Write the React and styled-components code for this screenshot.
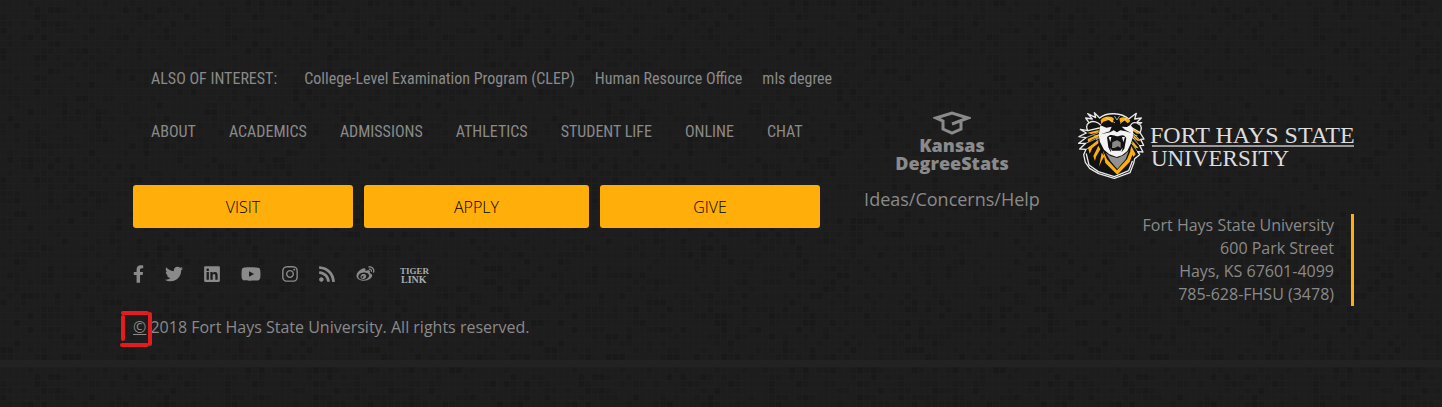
import React from 'react'
import styled, { createGlobalStyle } from 'styled-components'
import {
  FaFacebookF,
  FaTwitter,
  FaLinkedin,
  FaYoutube,
  FaInstagram,
  FaRss,
  FaWeibo,
} from 'react-icons/fa'

const colors = {
  background: '#1f1f1f',
  text: '#8a8a8a',
  gold: '#ffae0a',
  black: '#111',
  red: '#e41b1f',
}

// dark mosaic tile, repeated behind the whole footer
const mosaic = () => {
  let seed = 11
  const next = () => {
    seed = (seed * 16807) % 2147483647
    return seed / 2147483647
  }
  const cells = []
  for (let row = 0; row < 53; row++) {
    for (let col = 0; col < 80; col++) {
      const n = next()
      const opacity = n > 0.9 ? 0.2 : n > 0.65 ? 0.13 : 0.07
      cells.push(
        `<rect x='${(col * 6.8 + 0.5).toFixed(1)}' y='${(row * 6.8 + 0.5).toFixed(1)}' width='5.8' height='5.8' rx='.5' opacity='${opacity}'/>`
      )
    }
  }
  const svg =
    `<svg xmlns='http://www.w3.org/2000/svg' width='544' height='367'>` +
    `${cells.join('')}<rect y='360' width='544' height='7' fill='#222'/></svg>`
  return `url("data:image/svg+xml,${encodeURIComponent(svg)}")`
}

const GlobalStyle = createGlobalStyle`
  body {
    margin: 0;
    background-color: ${colors.background};
    background-image: ${mosaic()};
  }

  * {
    box-sizing: border-box;
  }
`

const Footer = styled.footer`
  display: grid;
  grid-template-columns: minmax(0, 699fr) minmax(0, 240fr) minmax(0, 282fr);
  padding: 64px 88px 64px 133px;
  color: ${colors.text};
  font-family: 'Open Sans', sans-serif;
  font-size: 16px;
  line-height: 23px;

  a {
    color: inherit;
    text-decoration: none;
  }
`

const LinkRow = styled.nav`
  display: flex;
  gap: ${props => props.$gap}px;
  padding-left: 18px;
  margin-bottom: 24px;
  font-family: 'Roboto Condensed', Roboto, sans-serif;
  line-height: 29px;
  white-space: nowrap;
`

const Label = styled.span`
  margin-right: 7px;
`

const Buttons = styled.div`
  display: grid;
  grid-template-columns: 220fr 225fr 220fr;
  gap: 11px;
  padding-right: 12px;
  margin: 39px 0 36px;
`

const Button = styled.button`
  height: 43px;
  padding: 0;
  border: 0;
  border-radius: 3px;
  background: ${colors.gold};
  color: #000;
  font: 300 16px 'Open Sans', sans-serif;
`

const Social = styled.div`
  display: flex;
  align-items: center;
  gap: 21px;
  height: 20px;
  margin-bottom: 32px;
`

const SocialLink = styled.a`
  display: flex;

  svg {
    width: ${props => props.$width}px;
    height: ${props => props.$height || 18}px;
  }
`

const Copyright = styled.p`
  margin: 0;
`

const Marked = styled.span`
  position: relative;

  svg {
    position: absolute;
    left: -14px;
    top: -6px;
  }
`

const Stats = styled.div`
  display: flex;
  flex-direction: column;
  align-items: center;
  padding-top: 47px;
  font-size: 18px;
`

const StatsLogo = styled.a`
  display: flex;
  flex-direction: column;
  align-items: center;
  margin-bottom: 16px;
  font-weight: 800;
  line-height: 18px;
`

const Contact = styled.div`
  display: flex;
  flex-direction: column;
  align-items: flex-end;
  padding-top: 47px;
`

const Address = styled.address`
  margin-top: 33px;
  padding-right: 17px;
  border-right: 3px solid ${colors.gold};
  font-style: normal;
  text-align: right;
`

const pages = ['About', 'Academics', 'Admissions', 'Athletics', 'Student Life', 'Online', 'Chat']

const networks = [
  ['Facebook', FaFacebookF, 11],
  ['Twitter', FaTwitter, 18],
  ['LinkedIn', FaLinkedin, 16],
  ['YouTube', FaYoutube, 20],
  ['Instagram', FaInstagram, 16],
  ['RSS', FaRss, 16],
  ['Weibo', FaWeibo, 19],
]

const TigerLink = () => (
  <svg viewBox="0 0 34 20" fill="#aaa" fontFamily="Liberation Serif, serif" fontWeight="700">
    <text x="4" y="10" fontSize="9">TIGER</text>
    <text x="5" y="19" fontSize="10">LINK</text>
  </svg>
)

const GradCap = () => (
  <svg width="38" height="25" viewBox="0 0 38 25" fill="none" stroke="#8a8a8a" strokeWidth="3">
    <path d="M10 10 3 7 19 2l16 5-16 6M10 9v9l9 4 9-4v-7" />
  </svg>
)

const UniversityLogo = () => (
  <svg width="276" height="70" viewBox="0 0 276 70" overflow="visible" role="img" aria-label="Fort Hays State University">
    <g transform="translate(-9 -11) scale(.3333)" strokeLinejoin="round" strokeLinecap="round">
      {/* mane and whiskers */}
      <g fill="none" stroke="#e8e8e8" strokeWidth="4">
        <path
          fill={colors.black}
          d="M92 54 76 38 80 53 56 41 70 57 50 54 60 68C50 75 52 86 57 92L34 88 52 99 30 110 51 113 29 130 50 130 32 147 51 148 44 164 49 187 62 205 89 221 136 235 183 218 194 190 197 176 212 164 206 155 222 156 212 137 224 136 215 118 225 117 213 98C218 88 219 79 211 72L218 68 204 67 217 54 197 57 202 40 179 57C158 37 113 36 92 54Z"
        />
        <path d="M52 162 60 195 88 215 136 230 179 212 190 184" />
        <path d="M61 68C72 60 88 68 94 74M209 72C199 64 190 69 186 74M57 92 91 84M213 98 190 84" />
        <path strokeWidth="2" d="M51 113 88 98M50 130 88 113M51 148 86 128M213 120 191 98M212 137 190 112M206 155 188 130" />
      </g>
      {/* gold stripes */}
      <g fill={colors.gold}>
        <path d="M95 61C103 47 128 47 135 56L130 68 119 60 103 65 97 73ZM151 56C163 48 181 53 184 64L176 70 166 61 154 68Z" />
        <path d="M54 99 89 90 89 97 67 102ZM56 117 90 103 88 112 70 118 57 127ZM57 143 88 119 88 130 70 144 62 161ZM73 168 88 137 94 148 81 170 78 183ZM90 200 98 158 106 169 98 182Z" />
        <path d="M190 84 213 101 204 101 192 93ZM193 104 216 124 205 122 193 112ZM190 122 209 145 199 143 190 132ZM187 138 200 163 193 171 184 151Z" />
      </g>
      {/* face */}
      <path fill="#f2f2f2" d="M94 76 112 83 128 80 122 94 95 103 123 97 134 91 144 97 154 91 170 94 187 99 168 89 158 80 174 81 185 74 193 88 192 109 186 130 175 153 159 166 143 171 121 163 105 149 93 126 89 106Z" />
      <path fill={colors.black} d="M103 73 125 75 118 82ZM158 73 181 71 168 80ZM134 81 153 81 150 90 144 95 137 90ZM114 112C125 99 137 109 144 109 154 109 162 99 172 114L166 146 158 156 125 155 118 142Z" />
      <path fill="#f2f2f2" d="M119 111 127 111 124 126ZM159 111 168 111 163 127ZM124 143 129 152 154 152 161 143 157 158 127 158Z" />
      <path fill="#888" d="M130 127 144 121 155 127 155 144 147 139 137 144 129 144Z" />
      <path fill="#929292" d="M110 158 124 168 145 174 165 165 179 153 170 178 145 207 125 184Z" />
      <path fill={colors.gold} d="M102 152 114 178 144 211 174 178 186 149 192 160 182 186 145 224 109 189Z" />
      <g fill="none" stroke="#e8e8e8" strokeWidth="2">
        <path d="M97 104 75 108M98 109 82 119M188 103 204 107M185 109 199 119M137 49 144 60 151 49M112 53 137 68M174 54 154 70" />
      </g>
    </g>
    <g fill="#ddd" fontFamily="Liberation Serif, serif">
      <text x="72" y="32" fontSize="24">FORT HAYS STATE</text>
      <text x="73" y="55" fontSize="23">UNIVERSITY</text>
      <path fill="#999" d="M74 34h202v2H74z" />
    </g>
  </svg>
)

export default () => (
  <>
    <GlobalStyle />
    <Footer>
      <div>
        <LinkRow $gap={20}>
          <Label>ALSO OF INTEREST:</Label>
          <a href="#clep">College-Level Examination Program (CLEP)</a>
          <a href="#hr">Human Resource Office</a>
          <a href="#mls">mls degree</a>
        </LinkRow>
        <LinkRow $gap={33}>
          {pages.map(page => (
            <a key={page} href="#page">{page.toUpperCase()}</a>
          ))}
        </LinkRow>
        <Buttons>
          <Button>VISIT</Button>
          <Button>APPLY</Button>
          <Button>GIVE</Button>
        </Buttons>
        <Social>
          {networks.map(([name, Icon, width]) => (
            <SocialLink key={name} href="#social" aria-label={name} $width={width}>
              <Icon />
            </SocialLink>
          ))}
          <SocialLink href="#tigerlink" aria-label="TigerLink" $width={34} $height={20}>
            <TigerLink />
          </SocialLink>
        </Social>
        <Copyright>
          <Marked>
            <u>©</u>
            <svg width="34" height="38" fill="none" stroke={colors.red} strokeWidth="4" strokeLinecap="round">
              <path d="M4 3h24M4 7v22M31 4v30M3 35h25" />
            </svg>
          </Marked>{' '}
          2018 Fort Hays State University. All rights reserved.
        </Copyright>
      </div>
      <Stats>
        <StatsLogo href="#degreestats">
          <GradCap />
          <span>Kansas</span>
          <span>DegreeStats</span>
        </StatsLogo>
        <a href="#help">Ideas/Concerns/Help</a>
      </Stats>
      <Contact>
        <UniversityLogo />
        <Address>
          Fort Hays State University<br />
          600 Park Street<br />
          Hays, KS 67601-4099<br />
          785-628-FHSU (3478)
        </Address>
      </Contact>
    </Footer>
  </>
)
